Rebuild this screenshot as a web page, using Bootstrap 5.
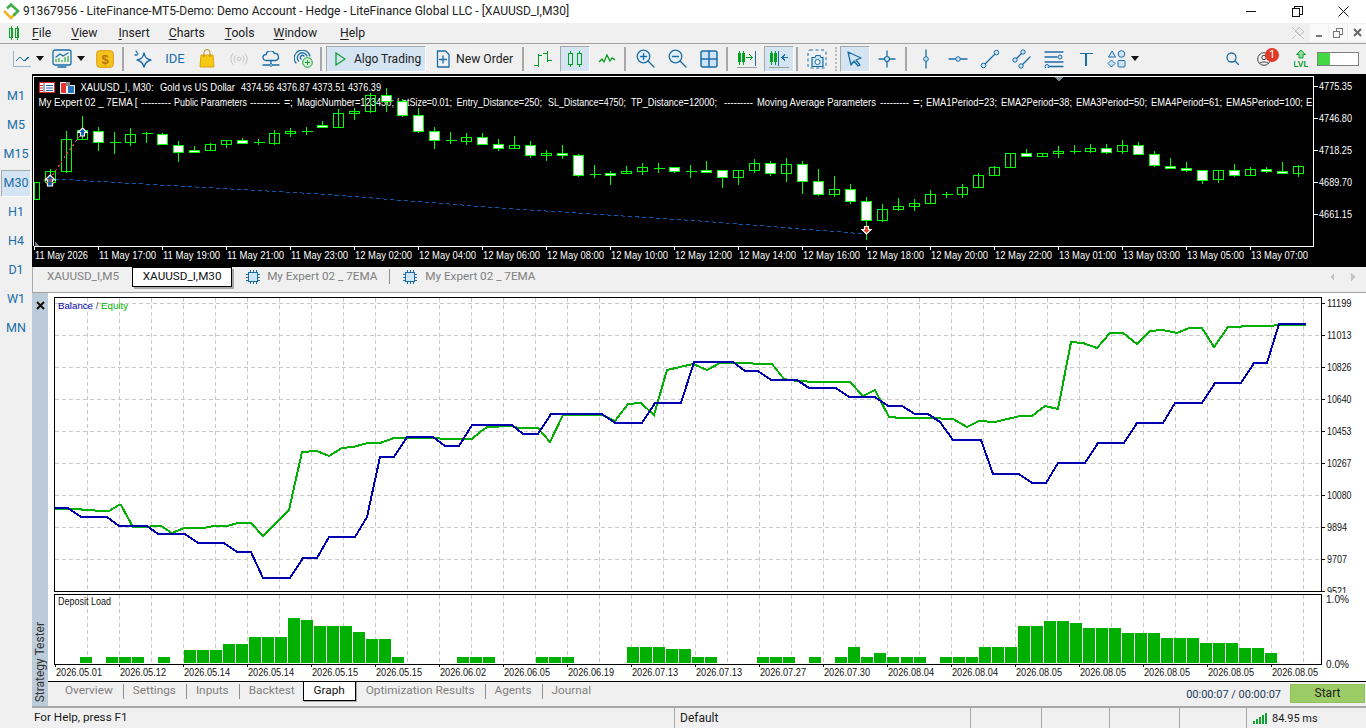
<!DOCTYPE html>
<html lang="en">
<head>
  <meta charset="UTF-8">
  <meta name="viewport" content="width=device-width, initial-scale=1.0">
  <title>LiteFinance-MT5-Demo</title>
  <link href="https://cdn.jsdelivr.net/npm/bootstrap@5.3.0/dist/css/bootstrap.min.css" rel="stylesheet">
  <style>
    html, body { height: 100%; }
    body {
      width: 1366px; height: 728px; overflow: hidden;
      background: #f0f0f0; color: #1a1a1a;
      font-family: Roboto, "Liberation Sans", sans-serif; font-size: 12px; line-height: 1;
    }
    svg { display: block; shape-rendering: crispEdges; }
    svg.smooth { shape-rendering: auto; }

    /* title and menu */
    .title-bar { height: 23px; background: #fff; padding-left: 2px; }
    .title-text { margin-left: 3px; font-size: 12.05px; color: #222; }
    .win-btn { width: 46px; }
    .menu-bar { height: 20px; }
    .menu-bar .nav-link { padding: 0; color: #222; font-size: 12.2px; }
    .menu-bar u { text-underline-offset: 2px; }
    #menuItems .nav-link:nth-child(1) { margin-left: 12px; }
    #menuItems .nav-link:nth-child(2) { margin-left: 20px; }
    #menuItems .nav-link:nth-child(3) { margin-left: 21px; }
    #menuItems .nav-link:nth-child(4) { margin-left: 19px; }
    #menuItems .nav-link:nth-child(5) { margin-left: 20px; }
    #menuItems .nav-link:nth-child(6) { margin-left: 19px; }
    #menuItems .nav-link:nth-child(7) { margin-left: 23px; }
    .menu-mini { width: 18px; height: 17px; background: #fafafa; margin-left: 1px; }

    /* toolbar */
    .tool-bar { height: 31px; border-top: 1px solid #a0a0a0; }
    .tbtn { width: 32px; height: 26px; flex: none; }
    .tbtn.wide { width: 40px; }
    .tbtn.after-caret { margin-left: 1px; }
    .tbtn.is-on, .algo-btn {
      background: #d5e4f2;
      border-top: 1px solid #a8a8a8; border-left: 1px solid #a8a8a8;
      border-right: 1px solid #fff; border-bottom: 1px solid #fff;
    }
    .tbtn.is-on { width: 30px; margin: 0 1px; }
    .tsep { width: 2px; height: 24px; margin: 0 3px 0 1px; background: #a8a8a8; flex: none; }
    .tsep.roomy { margin-left: 2px; }
    .tgrip { width: 2px; height: 24px; margin: 0 2px; flex: none; border-left: 2px dotted #b8b8b8; }
    .tcaret { border: 4px solid transparent; border-top: 5px solid #111; border-bottom: 0; flex: none; }
    .shape-btn { padding-left: 5px; gap: 4px; }
    .algo-btn { width: 100px; height: 26px; margin-left: 1px; font-size: 12px; color: #222; flex: none; padding-left: 8px; gap: 8px; white-space: nowrap; }
    .order-btn { width: 91px; height: 26px; margin-left: 4px; font-size: 12.2px; color: #222; flex: none; padding-left: 6px; gap: 6px; white-space: nowrap; }
    .ide-label { color: #1a6ea8; font-size: 13px; }
    .person-btn { margin-right: 5px; }
    .load-bar { width: 42px; height: 14px; border: 1px solid #7f7f7f; background: #fff; margin-right: 7px; flex: none; }
    .load-fill { width: 12px; height: 100%; background: #43d943; }
    .notify-dot {
      position: absolute; top: 2px; right: 1px; width: 14px; height: 14px; border-radius: 50%;
      background: #e03a28; color: #fff; font-size: 11px; line-height: 14px; text-align: center;
    }

    /* side list of periods */
    .work-area { height: 634px; }
    .side-list { width: 32px; padding-top: 8px; flex: none; }
    .side-item { height: 29px; color: #1a6ea8; font-size: 12.5px; }
    .side-item.is-on { height: 27px; margin: 1px;
      background: #d5e4f2; border-top: 1px solid #a8a8a8; border-left: 1px solid #a8a8a8;
      border-right: 1px solid #fff; border-bottom: 1px solid #fff; }

    .right-col { width: 1334px; }
    .price-box { height: 193px; background: #000; }
    .chart-tabs { height: 26px; border-bottom: 1px solid #a0a0a0; border-left: 1px solid #a8a8a8; }
    .chart-tab { color: #808080; font-size: 11.7px; height: 20px; }
    .chart-tab.first { margin-left: 14px; }
    .chart-tab.next { margin-left: 14px; }
    .chart-tab.is-on {
      background: #fff; color: #111; margin-left: 13px; width: 100px;
      border: 1px solid #000; box-shadow: 2px 2px 0 #a8a8a8;
    }
    .chip-name { margin-left: 7px; }
    .chip-name.far { margin-left: 8px; }
    .tab-sep { width: 1px; height: 15px; background: #909090; }
    .chart-sep { height: 20px; margin: 0 13px 0 12px; }
    .tab-arrows { height: 20px; gap: 17px; margin-right: 11px; }

    /* strategy tester */
    .tester-box { height: 413px; }
    .tester-strip { width: 16px; background: #bccbd9; flex: none; color: #333; padding: 4px 0 3px; }
    .strip-label { writing-mode: vertical-rl; transform: rotate(180deg); font-size: 12px; }
    .tester-main { width: 1318px; background: #fff; }
    .graph-box { height: 388px; }
    .tester-tabs { height: 25px; background: #f0f0f0; border-top: 1px solid #000; color: #808080; font-size: 11.8px; }
    .tester-tab { height: 19px; }
    .tester-tab.first { margin-left: 17px; }
    .tester-tab.spaced { margin-left: 10px; }
    .tester-tab.is-on {
      background: #fff; color: #111; width: 53px; margin-top: -1px; margin-left: 8px; height: 20px;
      border: 1px solid #000; box-shadow: 1px 1px 0 #a8a8a8;
    }
    .tester-tabs .tab-sep { margin: 2px 9px 0 10px; }
    .time-label { color: #1f3a5a; margin-right: 9px; margin-top: 7px; font-size: 11px; }
    .btn.start-btn {
      width: 75px; height: 19px; padding: 0; border-radius: 0; margin-right: 1px; margin-top: 2px;
      background: #9ccc65; border: 1px solid #8fc05c; color: #222; font-size: 12px; line-height: 1;
    }

    /* status */
    .status-line { border-top: 2px solid #a8a8a8; margin-left: 32px; height: 22px; }
    .status-cell { border-left: 1px solid #a8a8a8; height: 100%; padding-left: 5px; flex: none; }
    .status-cell.help { width: 642px; padding-left: 2px; border-left: 0; font-size: 11.7px; }
    .status-cell.profile { width: 296px; }
    .status-cell.c1 { width: 71px; }
    .status-cell.c2 { width: 68px; }
    .status-cell.c3 { width: 70px; }
    .status-cell.c4 { width: 67px; }
    .status-cell.ping { gap: 5px; font-size: 11px; }

    /* svg text */
    .ch-text { fill: #fff; font: 10.5px "Liberation Sans", sans-serif; }
    .ch-line { fill: #fff; font: 10.1px "Liberation Sans", sans-serif; }
    .gr-text { fill: #111; font: 10.5px "Liberation Sans", sans-serif; }
    .gr-legend { font: 9.7px "Liberation Sans", sans-serif; }
    .st { fill: none; stroke: #1a6ea8; stroke-width: 1.3; stroke-linecap: round; stroke-linejoin: round; }
    .stn { fill: none; stroke: #00a020; stroke-width: 1; }
  </style>
</head>
<body class="d-flex flex-column">

  <!-- Title bar -->
  <div class="title-bar d-flex align-items-center">
    <svg class="smooth" width="18" height="18" viewBox="0 0 18 18">
      <path d="M2 9l7 7 4-4" fill="none" stroke="#f0b429" stroke-width="2.6"/>
      <path d="M5 6.5L9 2.5l7 6.5-4.5 4.5" fill="none" stroke="#3fae49" stroke-width="2.6"/>
    </svg>
    <span class="title-text">91367956 - LiteFinance-MT5-Demo: Demo Account - Hedge - LiteFinance Global LLC - [XAUUSD_I,M30]</span>
    <div class="ms-auto d-flex">
      <div class="win-btn d-flex justify-content-center"><svg width="10" height="10"><path d="M0 5.5h10" stroke="#111"/></svg></div>
      <div class="win-btn d-flex justify-content-center"><svg width="11" height="11"><path d="M.5 2.5h7v8h-7zM2.5 2.5v-2h8v8h-3" fill="none" stroke="#111"/></svg></div>
      <div class="win-btn d-flex justify-content-center"><svg class="smooth" width="11" height="11"><path d="M.5.5l10 10M10.500.5l-10 10" stroke="#111"/></svg></div>
    </div>
  </div>

  <!-- Menu -->
  <div class="menu-bar d-flex align-items-center">
    <svg class="ms-2" width="12" height="14" viewBox="0 0 12 14">
      <path d="M1.5 2.5h3v9h-3zM7.5 2.5h3v9h-3zM3 0v14M9 0v14" fill="none" stroke="#0fa52a"/>
    </svg>
    <nav class="nav" id="menuItems">
      <a class="nav-link" href="#"><u>F</u>ile</a>
      <a class="nav-link" href="#"><u>V</u>iew</a>
      <a class="nav-link" href="#"><u>I</u>nsert</a>
      <a class="nav-link" href="#"><u>C</u>harts</a>
      <a class="nav-link" href="#"><u>T</u>ools</a>
      <a class="nav-link" href="#"><u>W</u>indow</a>
      <a class="nav-link" href="#"><u>H</u>elp</a>
    </nav>
    <div class="ms-auto d-flex align-items-center">
      <svg class="smooth me-1" width="14" height="14" viewBox="0 0 14 14"><path d="M8 1l5 5-2 1-2 3-5-5 3-2zM5 9l-4 4M1 1l12 12" fill="none" stroke="#c4c4c4"/></svg>
      <div class="menu-mini d-flex align-items-end justify-content-center pb-1"><svg width="8" height="3"><path d="M1 1.5h6" stroke="#777" stroke-width="2"/></svg></div>
      <div class="menu-mini d-flex align-items-center justify-content-center"><svg width="10" height="10"><path d="M.5 3.5h6v6h-6zM3 3V.5h6.5v6H7" fill="none" stroke="#777"/></svg></div>
      <div class="menu-mini d-flex align-items-center justify-content-center"><svg class="smooth" width="9" height="9"><path d="M1 1l7 7M8 1l-7 7" stroke="#666" stroke-width="2"/></svg></div>
    </div>
  </div>

  <!-- Toolbar -->
  <div class="tool-bar d-flex align-items-center ps-2">
    <div class="tbtn wide d-flex align-items-center gap-1 ps-1">
      <svg width="20" height="18" viewBox="0 0 20 18"><path d="M1.5 1v15H19" fill="none" stroke="#9db3c6"/><path class="st" d="M4 11l4-4 4 4 5-4"/></svg>
      <span class="tcaret"></span>
    </div>
    <div class="tbtn wide d-flex align-items-center gap-1 ps-1">
      <svg class="smooth" width="21" height="20" viewBox="0 0 21 20"><rect class="st" x="1" y="1" width="18" height="15" rx="2"/><path class="st" d="M6 18h8"/><path class="stn" d="M4 13v-3M7 13V9M10 13v-2M13 13V8M16 13V7"/><path class="st" d="M4 8l4-3 3 2 5-3"/></svg>
      <span class="tcaret"></span>
    </div>
    <div class="tbtn after-caret d-flex align-items-center justify-content-center">
      <svg class="smooth" width="18" height="18" viewBox="0 0 18 18"><rect x=".7" y=".7" width="16.6" height="16.6" rx="3" fill="#f6c21c" stroke="#e09a10"/><text x="9" y="13.5" text-anchor="middle" font-family="Liberation Sans" font-weight="700" font-size="13" fill="#b8770a">$</text></svg>
    </div>
    <span class="tsep"></span>
    <div class="tbtn d-flex align-items-center justify-content-center">
      <svg class="smooth" width="20" height="20" viewBox="0 0 20 20"><path class="st" d="M11 4c1 5 3 6 7 7-4 1-6 3-7 7-1-4-3-6-7-7 4-1 6-2 7-7z"/><path class="st" d="M3 2l2 3M2 6h2"/></svg>
    </div>
    <div class="tbtn d-flex align-items-center justify-content-center ide-label">IDE</div>
    <div class="tbtn d-flex align-items-center justify-content-center">
      <svg class="smooth" width="16" height="19" viewBox="0 0 16 19"><path d="M2 6h12l1 12H1z" fill="#f7c912" stroke="#d9a514"/><path d="M5 8V3.5a3 3 0 0 1 6 0V8" fill="none" stroke="#b88a10"/></svg>
    </div>
    <div class="tbtn d-flex align-items-center justify-content-center">
      <svg class="smooth" width="18" height="12" viewBox="0 0 18 12"><circle cx="9" cy="6" r="1.8" fill="none" stroke="#c4c4c4"/><path d="M5.5 2.5a5 5 0 0 0 0 7M12.5 2.5a5 5 0 0 1 0 7M3 .5a8 8 0 0 0 0 11M15 .5a8 8 0 0 1 0 11" fill="none" stroke="#c4c4c4"/></svg>
    </div>
    <div class="tbtn d-flex align-items-center justify-content-center">
      <svg class="smooth" width="18" height="16" viewBox="0 0 18 16"><path class="st" d="M4 9.5a3 3 0 0 1 0-6 4.5 4.5 0 0 1 8.5-1A3.6 3.6 0 0 1 14 9.5zM1 14h16M9 10v4"/><circle cx="9" cy="14" r="1.3" fill="#fff" stroke="#1a6ea8"/></svg>
    </div>
    <div class="tbtn d-flex align-items-center justify-content-center">
      <svg class="smooth" width="19" height="18" viewBox="0 0 19 18"><path class="st" d="M2 13A8 8 0 1 1 16 6M4.500 11A5 5 0 1 1 13 6M7 9a2 2 0 1 1 3-3"/><circle cx="13.500" cy="12.500" r="4.800" fill="#d8f2d8" stroke="#10a030"/><path d="M13.500 10v5M11 12.500h5" stroke="#10a030"/></svg>
    </div>
    <span class="tsep"></span>
    <div class="algo-btn d-flex align-items-center">
      <svg class="smooth" width="11" height="14" viewBox="0 0 11 14"><path d="M1 1l9 6-9 6z" fill="none" stroke="#10a030" stroke-width="1.300"/></svg>
      <span>Algo Trading</span>
    </div>
    <div class="order-btn d-flex align-items-center">
      <svg class="smooth" width="14" height="18" viewBox="0 0 14 18"><path class="st" d="M1.500 1h8l3.500 3.500V17h-11.500zM7 6v7M3.500 9.500h7"/></svg>
      <span>New Order</span>
    </div>
    <span class="tsep"></span>
    <div class="tbtn d-flex align-items-center justify-content-center">
      <svg width="20" height="20" viewBox="0 0 20 20"><path d="M5.500 5v13M1 16.500h4.500M5.500 6H9M14.500 2v11M10 4.500h4.500M14.500 11.500H19" fill="none" stroke="#00a020"/></svg>
    </div>
    <div class="tbtn is-on d-flex align-items-center justify-content-center">
      <svg width="16" height="20" viewBox="0 0 16 20"><path d="M1.500 4.500h4v11h-4zM10.500 4.500h4v11h-4zM3.500 2v2M3.500 16v2M12.500 2v2M12.500 16v2" fill="none" stroke="#00a020"/></svg>
    </div>
    <div class="tbtn d-flex align-items-center justify-content-center">
      <svg class="smooth" width="18" height="10" viewBox="0 0 18 10"><path d="M1 8l3-3 2 3 3-7 3 6 2-3 3 2" fill="none" stroke="#00a020" stroke-width="1.300"/></svg>
    </div>
    <span class="tsep"></span>
    <div class="tbtn d-flex align-items-center justify-content-center">
      <svg class="smooth" width="19" height="19" viewBox="0 0 19 19"><circle cx="7.500" cy="7.500" r="6.300" fill="#e6f0f8" stroke="#1a6ea8" stroke-width="1.300"/><path class="st" d="M12 12l6 6M4.500 7.500h6M7.500 4.500v6"/></svg>
    </div>
    <div class="tbtn d-flex align-items-center justify-content-center">
      <svg class="smooth" width="19" height="19" viewBox="0 0 19 19"><circle cx="7.500" cy="7.500" r="6.300" fill="#e6f0f8" stroke="#1a6ea8" stroke-width="1.300"/><path class="st" d="M12 12l6 6M4.500 7.500h6"/></svg>
    </div>
    <div class="tbtn d-flex align-items-center justify-content-center">
      <svg class="smooth" width="18" height="18" viewBox="0 0 18 18"><rect x="1" y="1" width="16" height="16" rx="2" fill="#cfe4f6" stroke="#1a6ea8" stroke-width="1.500"/><path d="M9 1v16M1 9h16" stroke="#1a6ea8" stroke-width="1.500"/></svg>
    </div>
    <span class="tsep"></span>
    <div class="tbtn d-flex align-items-center justify-content-center">
      <svg width="20" height="20" viewBox="0 0 20 20"><path d="M1.500 4.500h2v8h-2zM5.500 4.500h2v8h-2zM2.500 2v14M6.500 2v14" fill="none" stroke="#00a020"/><path d="M9 8.500h6M12.500 5.500l3 3-3 3" fill="none" stroke="#00a020"/><path d="M18.500 2v15" stroke="#1a6ea8"/><path d="M0 18.500h20" stroke="#a0a0a0"/></svg>
    </div>
    <div class="tbtn is-on d-flex align-items-center justify-content-center">
      <svg width="20" height="20" viewBox="0 0 20 20"><path d="M1.500 4.500h2v8h-2zM5.500 4.500h2v8h-2zM2.500 2v14M6.500 2v14" fill="none" stroke="#00a020"/><path d="M9.500 2v15" stroke="#1a6ea8"/><path d="M13 8.500h6M16 5.500l-3 3 3 3" fill="none" stroke="#1a6ea8"/><path d="M0 18.500h20" stroke="#a0a0a0"/></svg>
    </div>
    <span class="tsep"></span>
    <div class="tbtn d-flex align-items-center justify-content-center">
      <svg class="smooth" width="20" height="20" viewBox="0 0 20 20"><rect x="1" y="1" width="18" height="18" rx="2" fill="none" stroke="#1a6ea8" stroke-dasharray="3 2.500"/><path d="M5 8.500h3l1-2h4l1 2h2v9H5z" fill="#cfe4f6" stroke="#1a6ea8" stroke-width="1.200"/><circle cx="10.500" cy="13" r="2.500" fill="#fff" stroke="#1a6ea8"/></svg>
    </div>
    <span class="tgrip"></span>
    <div class="tbtn is-on d-flex align-items-center justify-content-center">
      <svg class="smooth" width="16" height="16" viewBox="0 0 16 16"><path class="st" d="M1 1l13 6-5 2 4 5-2 1-4-5-3 4z"/></svg>
    </div>
    <div class="tbtn d-flex align-items-center justify-content-center">
      <svg class="smooth" width="18" height="18" viewBox="0 0 18 18"><path class="st" d="M9 1v5M9 12v5M1 9h5M12 9h5"/><circle cx="9" cy="9" r="2.500" fill="#cfe4f6" stroke="#1a6ea8" stroke-width="1.200"/></svg>
    </div>
    <span class="tsep roomy"></span>
    <div class="tbtn d-flex align-items-center justify-content-center">
      <svg class="smooth" width="8" height="20" viewBox="0 0 8 20"><path class="st" d="M4 1v18"/><circle cx="4" cy="10" r="2.300" fill="#cfe4f6" stroke="#1a6ea8"/></svg>
    </div>
    <div class="tbtn d-flex align-items-center justify-content-center">
      <svg class="smooth" width="20" height="8" viewBox="0 0 20 8"><path class="st" d="M1 4h18"/><circle cx="10" cy="4" r="2.300" fill="#cfe4f6" stroke="#1a6ea8"/></svg>
    </div>
    <div class="tbtn d-flex align-items-center justify-content-center">
      <svg class="smooth" width="20" height="20" viewBox="0 0 20 20"><path class="st" d="M4 16L16 4"/><circle cx="3.500" cy="16.500" r="2.300" fill="#cfe4f6" stroke="#1a6ea8"/><circle cx="16.500" cy="3.500" r="2.300" fill="#cfe4f6" stroke="#1a6ea8"/></svg>
    </div>
    <div class="tbtn d-flex align-items-center justify-content-center">
      <svg class="smooth" width="20" height="20" viewBox="0 0 20 20"><path class="st" d="M4 10l6-6M10 16l8-8"/><circle cx="3" cy="11" r="2.200" fill="#cfe4f6" stroke="#1a6ea8"/><circle cx="11" cy="3" r="2.200" fill="#cfe4f6" stroke="#1a6ea8"/><circle cx="9" cy="17" r="2.200" fill="#cfe4f6" stroke="#1a6ea8"/></svg>
    </div>
    <div class="tbtn d-flex align-items-center justify-content-center">
      <svg class="smooth" width="20" height="18" viewBox="0 0 20 18"><path class="st" d="M1 2h18M1 7h12M1 12h18M4 16.500h15"/><circle cx="16" cy="7" r="2" fill="#cfe4f6" stroke="#1a6ea8"/><circle cx="3" cy="16.500" r="2" fill="#cfe4f6" stroke="#1a6ea8"/></svg>
    </div>
    <div class="tbtn d-flex align-items-center justify-content-center">
      <svg width="14" height="14" viewBox="0 0 14 14"><path d="M.5 1.500h13M7 1.500V14" fill="none" stroke="#1a6ea8" stroke-width="1.300"/></svg>
    </div>
    <div class="tbtn wide shape-btn d-flex align-items-center">
      <svg class="smooth" width="20" height="18" viewBox="0 0 20 18"><path d="M5 1l3.500 6h-7z" fill="#cfe4f6" stroke="#1a6ea8"/><circle cx="14.500" cy="4" r="3.300" fill="#cfe4f6" stroke="#1a6ea8"/><path d="M4.500 10l3.500 3.500-3.500 3.500L1 13.500z" fill="#cfe4f6" stroke="#1a6ea8"/><rect x="11" y="10.500" width="7" height="6.500" rx="1" fill="#cfe4f6" stroke="#1a6ea8"/></svg>
      <span class="tcaret"></span>
    </div>
    <div class="ms-auto d-flex align-items-center">
      <div class="tbtn d-flex align-items-center justify-content-center">
        <svg class="smooth" width="13" height="13" viewBox="0 0 13 13"><circle cx="5.500" cy="5.500" r="4.500" fill="none" stroke="#1a6ea8" stroke-width="1.300"/><path class="st" d="M9 9l3.500 3.500"/></svg>
      </div>
      <div class="tbtn person-btn position-relative d-flex align-items-center justify-content-center">
        <svg class="smooth" width="14" height="14" viewBox="0 0 14 14"><circle cx="7" cy="7" r="6.300" fill="none" stroke="#444"/><circle cx="7" cy="5.500" r="2.200" fill="none" stroke="#444"/><path d="M2.500 11.500c1-2 8-2 9 0" fill="none" stroke="#444"/></svg>
        <span class="notify-dot">1</span>
      </div>
      <div class="tbtn d-flex align-items-center justify-content-center">
        <svg class="smooth" width="14" height="20" viewBox="0 0 14 20"><path d="M7 1L2.500 5.500H5V9h4V5.500h2.500z" fill="#8fdc9c" stroke="#10a030"/><text x="7" y="18" text-anchor="middle" font-family="Liberation Sans" font-weight="700" font-size="8.500" fill="#10a030">LVL</text></svg>
      </div>
      <div class="load-bar"><div class="load-fill"></div></div>
    </div>
  </div>

  <!-- Work area -->
  <div class="work-area d-flex">
    <div class="side-list d-flex flex-column">
      <div class="side-item d-flex align-items-center justify-content-center">M1</div>
      <div class="side-item d-flex align-items-center justify-content-center">M5</div>
      <div class="side-item d-flex align-items-center justify-content-center">M15</div>
      <div class="side-item is-on d-flex align-items-center justify-content-center">M30</div>
      <div class="side-item d-flex align-items-center justify-content-center">H1</div>
      <div class="side-item d-flex align-items-center justify-content-center">H4</div>
      <div class="side-item d-flex align-items-center justify-content-center">D1</div>
      <div class="side-item d-flex align-items-center justify-content-center">W1</div>
      <div class="side-item d-flex align-items-center justify-content-center">MN</div>
    </div>

    <div class="right-col d-flex flex-column">
      <div class="price-box"><svg id="priceChart" width="1334" height="193" viewBox="32 74 1334 193"></svg></div>

      <div class="chart-tabs d-flex align-items-start">
        <div class="chart-tab first d-flex align-items-center">XAUUSD_I,M5</div>
        <div class="chart-tab is-on d-flex align-items-center justify-content-center">XAUUSD_I,M30</div>
        <div class="chart-tab next d-flex align-items-center">
          <svg width="14" height="14" viewBox="0 0 14 14"><rect x="2.500" y="2.500" width="9" height="9" fill="#cfe6fa" stroke="#1a6ea8"/><path d="M4.500 0v2M7.500 0v2M10.500 0v2M4.500 12v2M7.500 12v2M10.500 12v2M0 4.500h2M0 7.500h2M0 10.500h2M12 4.500h2M12 7.500h2M12 10.500h2" stroke="#1a6ea8"/></svg>
          <span class="chip-name">My Expert 02 _ 7EMA</span>
        </div>
        <div class="chart-sep d-flex align-items-center"><span class="tab-sep"></span></div>
        <div class="chart-tab d-flex align-items-center">
          <svg width="14" height="14" viewBox="0 0 14 14"><rect x="2.500" y="2.500" width="9" height="9" fill="#cfe6fa" stroke="#1a6ea8"/><path d="M4.500 0v2M7.500 0v2M10.500 0v2M4.500 12v2M7.500 12v2M10.500 12v2M0 4.500h2M0 7.500h2M0 10.500h2M12 4.500h2M12 7.500h2M12 10.500h2" stroke="#1a6ea8"/></svg>
          <span class="chip-name far">My Expert 02 _ 7EMA</span>
        </div>
        <div class="tab-arrows ms-auto d-flex align-items-center">
          <svg width="4" height="8"><path d="M4 0v8L0 4z" fill="#c4c4c4"/></svg>
          <svg width="4" height="8"><path d="M0 0v8l4-4z" fill="#c4c4c4"/></svg>
        </div>
      </div>

      <!-- Strategy tester -->
      <div class="tester-box d-flex">
        <div class="tester-strip d-flex flex-column justify-content-between align-items-center">
          <svg class="smooth mt-1" width="9" height="9"><path d="M1 1l7 7M8 1l-7 7" stroke="#111" stroke-width="2"/></svg>
          <span class="strip-label">Strategy Tester</span>
        </div>
        <div class="tester-main d-flex flex-column">
          <div class="graph-box"><svg id="testerChart" width="1318" height="388" viewBox="48 293 1318 388"></svg></div>
          <div class="tester-tabs d-flex align-items-start">
            <div class="tester-tab first d-flex align-items-center">Overview</div>
            <span class="tab-sep"></span>
            <div class="tester-tab d-flex align-items-center">Settings</div>
            <span class="tab-sep"></span>
            <div class="tester-tab d-flex align-items-center">Inputs</div>
            <span class="tab-sep"></span>
            <div class="tester-tab d-flex align-items-center">Backtest</div>
            <div class="tester-tab is-on d-flex align-items-center justify-content-center">Graph</div>
            <div class="tester-tab spaced d-flex align-items-center">Optimization Results</div>
            <span class="tab-sep"></span>
            <div class="tester-tab d-flex align-items-center">Agents</div>
            <span class="tab-sep"></span>
            <div class="tester-tab d-flex align-items-center">Journal</div>
            <span class="time-label ms-auto">00:00:07 / 00:00:07</span>
            <button type="button" class="btn start-btn">Start</button>
          </div>
        </div>
      </div>
    </div>
  </div>

  <!-- Status bar -->
  <div class="status-line d-flex align-items-center">
    <div class="status-cell help d-flex align-items-center">For Help, press F1</div>
    <div class="status-cell profile d-flex align-items-center">Default</div>
    <div class="status-cell c1"></div>
    <div class="status-cell c2"></div>
    <div class="status-cell c3"></div>
    <div class="status-cell c4"></div>
    <div class="status-cell ping d-flex align-items-center">
      <svg width="15" height="12" viewBox="0 0 15 12"><path d="M1 12V9h1.500v3zM4 12V7h1.500v5zM7 12V5h1.500v7zM10 12V3h1.500v9zM13 12V1h1.500v11z" fill="#10a030"/></svg>
      <span>84.95 ms</span>
    </div>
  </div>

  <script>
    const NS = 'http://www.w3.org/2000/svg';

    function add(svg, tag, attrs, text) {
      const el = document.createElementNS(NS, tag);
      for (const k in attrs) el.setAttribute(k, attrs[k]);
      if (text !== undefined) el.textContent = text;
      svg.appendChild(el);
      return el;
    }

    // text helper, len is the width it has in the reference
    function label(svg, cls, x, y, str, len) {
      return add(svg, 'text', { class: cls, x: x, y: y, textLength: len, lengthAdjust: 'spacingAndGlyphs' }, str);
    }

    // candles: [high, low, bodyTop, bodyBottom, white]
    const candles = [
      [182,199,182,199,0],[169,184,171,182,0],[131,173,139,171,0],[116,139,130,139,0],[127,151,131,142,1],
      [132,154,142,142,0],[128,146,134,142,0],[132,143,133,133,0],[133,145,134,144,1],[141,162,145,152,1],
      [146,153,150,152,1],[143,151,144,150,0],[140,148,140,144,0],[138,143,140,143,1],[139,145,142,142,0],
      [130,145,133,143,0],[128,137,131,133,0],[127,135,131,131,0],[121,128,125,127,1],[109,128,113,127,0],
      [108,120,111,113,0],[93,113,95,111,0],[88,112,95,101,1],[99,117,101,115,1],[108,133,115,131,1],
      [127,149,131,140,1],[132,144,140,140,0],[133,145,137,141,0],[133,145,137,144,1],[139,151,144,148,1],
      [136,148,145,148,0],[141,158,145,155,1],[150,161,153,155,0],[145,159,153,155,1],[154,177,155,175,1],
      [165,178,174,174,0],[171,185,173,175,1],[166,174,171,173,0],[163,175,167,171,0],[163,173,168,168,0],
      [167,173,167,171,1],[165,178,171,171,0],[161,172,170,172,1],[170,188,170,177,1],[170,185,170,177,0],
      [159,173,163,170,0],[161,176,163,173,1],[158,182,164,173,0],[161,194,164,181,1],[169,196,181,194,1],
      [176,197,189,194,0],[184,204,189,201,1],[197,240,201,220,1],[204,222,209,220,0],[198,211,206,209,0],
      [199,211,203,206,0],[190,203,194,203,0],[192,198,194,194,0],[184,198,187,194,0],[173,188,175,187,0],
      [166,175,167,175,0],[153,167,153,167,0],[149,157,153,156,1],[153,157,153,156,0],[146,158,151,153,0],
      [145,154,151,151,0],[144,153,148,151,0],[144,154,148,152,1],[140,154,145,151,0],[142,155,145,154,1],
      [151,167,154,165,1],[158,169,166,168,1],[162,172,168,170,1],[170,184,170,180,1],[170,183,170,179,0],
      [164,177,170,175,1],[167,176,169,175,0],[167,173,169,171,1],[162,173,171,173,1],[165,177,166,173,0]
    ];

    const priceAxis = [[86,'4775.35'],[118,'4746.80'],[150,'4718.25'],[182,'4689.70'],[214,'4661.15']];
    const timeAxis = ['11 May 17:00','11 May 19:00','11 May 21:00','11 May 23:00','12 May 02:00','12 May 04:00','12 May 06:00',
      '12 May 08:00','12 May 10:00','12 May 12:00','12 May 14:00','12 May 16:00','12 May 18:00','12 May 20:00','12 May 22:00',
      '13 May 01:00','13 May 03:00','13 May 05:00','13 May 07:00'];

    // expert line, placed piece by piece: [x, width, text]
    const expertLine = [
      [38.5,99,'My Expert 02 _ 7EMA ['],[141,30,'---------'],[174,73,'Public Parameters'],[250,30,'---------'],[284,9,'=;'],
      [297,97,'MagicNumber=123456;'],[397,55,'LotSize=0.01;'],[456.5,85.5,'Entry_Distance=250;'],[548,78,'SL_Distance=4750;'],
      [631,86,'TP_Distance=12000;'],[724,29,'---------'],[757,119,'Moving Average Parameters'],[880,29,'---------'],[913,10,'=;'],
      [926,71,'EMA1Period=23;'],[1001,71,'EMA2Period=38;'],[1076,71,'EMA3Period=50;'],[1151,71,'EMA4Period=61;'],
      [1226,77,'EMA5Period=100;'],[1306,6.5,'E']
    ];

    function drawPriceChart() {
      const s = document.getElementById('priceChart');
      const defs = add(s, 'defs', {});
      const clip = add(defs, 'clipPath', { id: 'plotClip' });
      add(clip, 'rect', { x: 34, y: 77, width: 1279, height: 169 });

      add(s, 'path', { d: 'M33.5 246V76.500H1313.500V246.500H33.5', fill: 'none', stroke: '#fff' });

      priceAxis.forEach(p => {
        add(s, 'path', { d: `M1314 ${p[0] + .5}h4`, stroke: '#fff' });
        label(s, 'ch-text', 1319, p[0] + 4, p[1], 33);
      });

      label(s, 'ch-text', 35, 259, '11 May 2026', 53);
      add(s, 'path', { d: 'M34.500 246v4', stroke: '#fff' });
      timeAxis.forEach((t, i) => {
        const x = 98 + 64 * i;
        add(s, 'path', { d: `M${x + .5} 246v4`, stroke: '#fff' });
        label(s, 'ch-text', x + 1, 259, t, 57);
      });

      const plot = add(s, 'g', { 'clip-path': 'url(#plotClip)' });

      // header lines, candles paint over them
      label(plot, 'ch-text', 80.500, 91, 'XAUUSD_I, M30:', 73);
      label(plot, 'ch-text', 160, 91, 'Gold vs US Dollar', 75);
      label(plot, 'ch-text', 241, 91, '4374.56 4376.87 4373.51 4376.39', 140);
      expertLine.forEach(p => label(plot, 'ch-line', p[0], 106, p[2], p[1]));

      add(plot, 'polyline', { points: '55,179 160,185 320,194 500,208 700,221 866,234', fill: 'none', stroke: '#0a5cb0', 'stroke-dasharray': '4 3' });

      candles.forEach((c, i) => {
        const x = 34.5 + 16 * i;
        const top = c[2] + .5, bot = c[3] + .5;
        add(plot, 'path', { d: `M${x} ${c[0]}V${c[1]}`, stroke: '#0f0' });
        if (c[2] === c[3]) {
          add(plot, 'path', { d: `M${x - 5} ${top}H${x + 6}`, stroke: '#0f0' });
        } else {
          add(plot, 'rect', { x: x - 5, y: top, width: 10, height: bot - top, fill: c[4] ? '#fff' : 'none', stroke: '#0f0' });
        }
      });

      add(plot, 'polyline', { points: '50,179 66,155 82,133', fill: 'none', stroke: '#e2432a', 'stroke-dasharray': '2 3' });

      // deal arrows
      const g = add(s, 'g', { 'shape-rendering': 'auto' });
      add(g, 'path', { d: 'M82.500 128l4.500 4.500h-2.500v3.500h-4v-3.500h-2.500z', fill: '#0a5cb0', stroke: '#fff', 'stroke-width': 1.2 });
      add(g, 'path', { d: 'M50 175l5 5h-2.500v6h-5v-6h-2.500z', fill: '#0a5cb0', stroke: '#fff', 'stroke-width': 1.2 });
      add(g, 'path', { d: 'M46 177l8 7M54 177l-8 7', stroke: '#e2432a' });
      add(g, 'path', { d: 'M866.500 234l-4.500-4.500h2.500v-3h4v3h2.500z', fill: '#e2432a', stroke: '#fff', 'stroke-width': 1.2 });

      // icons in the header
      add(g, 'rect', { x: 39.500, y: 82.500, width: 15, height: 10, fill: '#fff', stroke: '#d22' });
      add(g, 'path', { d: 'M44 83v9M46 85.500h7M46 88h7M46 90.500h7', stroke: '#2a5fb0' });
      add(g, 'path', { d: 'M40 85.500h3M40 88h3M40 90.500h3', stroke: '#d22' });
      add(g, 'path', { d: 'M60.500 82.500h6v11h-6z', fill: '#e33', stroke: '#fff' });
      add(g, 'path', { d: 'M67.500 85.500h7v8h-7z', fill: '#2a74c0', stroke: '#fff' });
      add(g, 'rect', { x: 66, y: 82, width: 4, height: 4, fill: '#888' });

      // shift marker and corner mark
      add(s, 'path', { d: 'M1054 77h9l-4.500 4.500z', fill: '#7a8a99' });
      add(s, 'path', { d: 'M35 246v-4l4 4z', fill: '#6a7480' });
    }

    // page coordinates of the curves
    const balance = [55,508,68,508,81,517,107,517,119,526,147,526,158,534,185,534,198,543,224,543,237,552,251,552,263,578,290,578,
      303,558,317,558,329,537,355,537,367,517,380,457,394,457,407,437,433,437,445,446,459,446,472,425,512,425,523,434,538,434,
      551,414,602,414,615,423,642,423,655,403,681,403,694,362,733,362,745,371,758,371,771,380,797,380,809,388,836,388,849,397,
      875,397,888,406,902,406,915,414,928,414,940,422,953,440,981,440,993,474,1019,474,1032,483,1046,483,1058,463,1085,463,
      1098,443,1124,443,1137,423,1163,423,1175,403,1202,403,1215,383,1241,383,1254,363,1267,363,1279,324,1306,324];
    const equity = [55,509,80,509,83,510,93,510,97,511,109,511,119,505,121,505,133,527,147,527,153,526,161,526,172,533,184,528,204,528,
      213,526,227,526,238,523,251,523,263,536,289,510,302,452,317,451,329,456,342,448,353,447,368,443,380,443,394,438,407,438,
      472,439,480,432,487,427,512,426,518,428,538,428,550,442,563,415,602,415,615,421,628,404,641,403,654,415,667,370,693,364,
      707,370,720,363,733,363,772,364,784,379,797,381,817,382,850,382,863,396,875,390,889,417,902,418,928,418,953,419,967,427,
      979,421,995,422,1020,416,1032,416,1045,406,1058,409,1071,342,1083,343,1097,348,1110,333,1123,333,1137,344,1150,331,
      1163,330,1177,333,1189,328,1202,328,1214,347,1228,327,1240,327,1243,326,1306,325];

    // deposit load: [slot start x, height]
    const loadBars = [[80,6],[106,6],[119,6],[132,6],[158,6],[184,13],[197,13],[210,13],[223,19],[236,19],[249,26],[262,26],[275,26],
      [288,45],[301,43],[314,37],[327,37],[340,37],[353,31],[366,24],[379,24],[392,6],[457,6],[470,6],[483,6],[536,6],[549,6],[562,6],
      [627,16],[640,16],[653,16],[666,14],[679,14],[692,6],[705,6],[757,6],[770,6],[783,6],[809,6],[835,6],[848,16],[861,6],[874,10],
      [887,6],[901,6],[914,6],[940,6],[953,6],[966,6],[979,16],[992,16],[1005,16],[1018,37],[1031,37],[1044,42],[1057,42],[1070,40],
      [1083,35],[1096,35],[1109,35],[1122,30],[1135,30],[1148,30],[1161,25],[1174,25],[1187,25],[1200,20],[1213,20],[1226,20],
      [1239,15],[1252,15],[1265,10]];

    const yAxis = ['11199','11013','10826','10640','10453','10267','10080','9894','9707','9521'];
    const xAxis = ['05.01','05.12','05.14','05.14','05.15','05.15','06.02','06.05','06.19','07.13','07.13','07.27','07.30','08.04','08.04','08.05','08.05','08.05','08.05','08.05'];

    function drawTesterChart() {
      const s = document.getElementById('testerChart');
      const defs = add(s, 'defs', {});
      const clip = add(defs, 'clipPath', { id: 'axisClip' });
      add(clip, 'rect', { x: 1322, y: 293, width: 44, height: 300 });
      const axis = add(s, 'g', { 'clip-path': 'url(#axisClip)' });

      // grid
      for (let x = 87; x <= 1303; x += 32) {
        add(s, 'path', { d: `M${x + .5} 298V591`, stroke: '#c8c8c8', 'stroke-dasharray': '4 3' });
        add(s, 'path', { d: `M${x + .5} 595V663`, stroke: '#c8c8c8', 'stroke-dasharray': '4 3' });
      }
      yAxis.forEach((t, i) => {
        const y = 303 + 32 * i;
        if (i < 9) add(s, 'path', { d: `M55 ${y + .5}H1321`, stroke: '#c8c8c8', 'stroke-dasharray': '4 3' });
        add(s, 'path', { d: `M1322 ${y + .5}h3`, stroke: '#111' });
        label(axis, 'gr-text', 1327, y + 4, t, t.length === 5 ? 24.5 : 20);
      });

      add(s, 'polyline', { points: equity.join(' '), fill: 'none', stroke: '#00b000', 'stroke-width': 2 });
      add(s, 'polyline', { points: balance.join(' '), fill: 'none', stroke: '#0000b0', 'stroke-width': 2 });

      add(s, 'rect', { x: 54.500, y: 297.500, width: 1267, height: 294, fill: 'none', stroke: '#000' });

      const legend = add(s, 'text', { class: 'gr-legend', x: 58, y: 309 });
      add(legend, 'tspan', { fill: '#0000b0' }, 'Balance');
      add(legend, 'tspan', { fill: '#555' }, ' / ');
      add(legend, 'tspan', { fill: '#00b000' }, 'Equity');

      loadBars.forEach(b => add(s, 'rect', { x: b[0], y: 663 - b[1], width: 12, height: b[1], fill: '#00b000' }));
      add(s, 'rect', { x: 54.500, y: 594.500, width: 1267, height: 69.500, fill: 'none', stroke: '#000' });
      label(s, 'gr-text', 58, 605, 'Deposit Load', 53);
      label(s, 'gr-text', 1326, 603, '1.0%', 23);
      label(s, 'gr-text', 1326, 668, '0.0%', 23);

      xAxis.forEach((t, i) => {
        const x = 56 + 64 * i;
        add(s, 'path', { d: `M${x - .5} 664v3`, stroke: '#111' });
        label(s, 'gr-text', x, 676, '2026.' + t, 46);
      });
    }

    drawPriceChart();
    drawTesterChart();
  </script>
  <script src="https://cdn.jsdelivr.net/npm/bootstrap@5.3.0/dist/js/bootstrap.bundle.min.js"></script>
</body>
</html>
